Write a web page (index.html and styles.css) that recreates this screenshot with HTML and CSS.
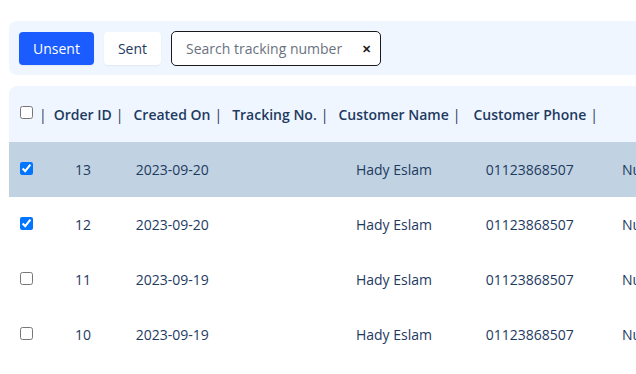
FILE: index.html
```html
<!DOCTYPE html>
<html lang="en">

<head>
    <meta charset="UTF-8">
    <meta name="viewport" content="width=device-width, initial-scale=1.0">
    <title>Orders</title>
    <link rel="stylesheet" href="styles.css">
</head>

<body>
    <div class="page">
        <div class="toolbar">
            <button class="btn btn-active">Unsent</button>
            <button class="btn">Sent</button>
            <div class="search">
                <input type="text" placeholder="Search tracking number">
                <span class="clear">&#x2715;</span>
            </div>
        </div>

        <table class="orders">
            <thead>
                <tr>
                    <th class="col-check"><input type="checkbox"><span class="sep">|</span></th>
                    <th>Order ID<span class="sep">|</span></th>
                    <th>Created On<span class="sep">|</span></th>
                    <th>Tracking No.<span class="sep">|</span></th>
                    <th>Customer Name<span class="sep">|</span></th>
                    <th class="col-phone">Customer Phone<span class="sep">|</span></th>
                    <th>Customer Address<span class="sep">|</span></th>
                </tr>
            </thead>
            <tbody>
                <tr class="selected">
                    <td class="col-check"><input type="checkbox" checked></td>
                    <td>13</td>
                    <td>2023-09-20</td>
                    <td></td>
                    <td>Hady Eslam</td>
                    <td class="col-phone">01123868507</td>
                    <td class="col-address">Nubaria, Beheira Governorate, Egypt</td>
                </tr>
                <tr>
                    <td class="col-check"><input type="checkbox" checked></td>
                    <td>12</td>
                    <td>2023-09-20</td>
                    <td></td>
                    <td>Hady Eslam</td>
                    <td class="col-phone">01123868507</td>
                    <td class="col-address">Nubaria, Beheira Governorate, Egypt</td>
                </tr>
                <tr>
                    <td class="col-check"><input type="checkbox"></td>
                    <td>11</td>
                    <td>2023-09-19</td>
                    <td></td>
                    <td>Hady Eslam</td>
                    <td class="col-phone">01123868507</td>
                    <td class="col-address">Nubaria, Beheira Governorate, Egypt</td>
                </tr>
                <tr>
                    <td class="col-check"><input type="checkbox"></td>
                    <td>10</td>
                    <td>2023-09-19</td>
                    <td></td>
                    <td>Hady Eslam</td>
                    <td class="col-phone">01123868507</td>
                    <td class="col-address">Nubaria, Beheira Governorate, Egypt</td>
                </tr>
            </tbody>
        </table>
    </div>
</body>

</html>
```

FILE: styles.css
```css
:root {
    --navy: #1e3a5f;
    --paleBlue: #eff6ff;
    --rowBlue: #c1d2e2;
    --primary: #1a5cff;
}

* {
    padding: 0;
    margin: 0;
    box-sizing: border-box;
}

html,
body {
    overflow: hidden;
}

body {
    font-family: "Open Sans", "Noto Sans", sans-serif;
    font-size: 14px;
    color: var(--navy);
    background-color: #fff;
}

.page {
    width: 980px;
    padding: 21px 0 0 9px;
}

/* 工具栏 */
.toolbar {
    display: flex;
    align-items: center;
    gap: 10px;
    height: 54px;
    padding: 0 10px;
    margin-bottom: 11px;
    border-radius: 8px;
    background-color: var(--paleBlue);
}

.btn {
    height: 33px;
    padding: 0 14px;
    border: none;
    border-radius: 4px;
    font-family: inherit;
    font-size: 14px;
    color: var(--navy);
    background-color: #fff;
    box-shadow: 0 1px 2px rgba(0, 0, 0, 0.06);
    cursor: pointer;
}

.btn-active {
    color: #fff;
    background-color: var(--primary);
}

.search {
    display: flex;
    align-items: center;
    width: 210px;
    height: 35px;
    padding: 0 9px 0 14px;
    border: 1px solid #1a1a1a;
    border-radius: 5px;
    background-color: #fff;
}

.search input {
    flex: 1;
    min-width: 0;
    border: none;
    outline: none;
    font-family: inherit;
    font-size: 14px;
    color: var(--navy);
}

.search input::placeholder {
    color: #6b7280;
}

.search .clear {
    font-size: 11px;
    font-weight: 700;
    color: #222;
}

/* 表格 */
.orders {
    border-collapse: separate;
    border-spacing: 0;
}

.orders th {
    height: 56px;
    padding: 0 5px;
    font-weight: 600;
    white-space: nowrap;
    background-color: var(--paleBlue);
}

.orders th:first-child {
    border-top-left-radius: 8px;
}

.orders th .sep {
    display: inline-block;
    margin-left: 4px;
    font-weight: 400;
}

.orders td {
    height: 55px;
    padding: 0 11px 0 0;
    text-align: center;
    white-space: nowrap;
}

.orders .col-check {
    padding: 0 5px 0 11px;
    text-align: left;
}

/* 复选框贴着文字基线 */
.orders .col-check input {
    width: 13px;
    height: 13px;
    vertical-align: baseline;
}

.orders th.col-check {
    padding-right: 2px;
}

.orders th.col-check input {
    vertical-align: 1px;
}

.orders th.col-check .sep {
    margin-left: 6px;
}

.orders th.col-phone {
    padding-left: 8px;
}

.orders td.col-phone {
    padding-left: 2px;
}

.orders td.col-address {
    padding-left: 19px;
    text-align: left;
}

.orders tr.selected td {
    background-color: var(--rowBlue);
}
```
